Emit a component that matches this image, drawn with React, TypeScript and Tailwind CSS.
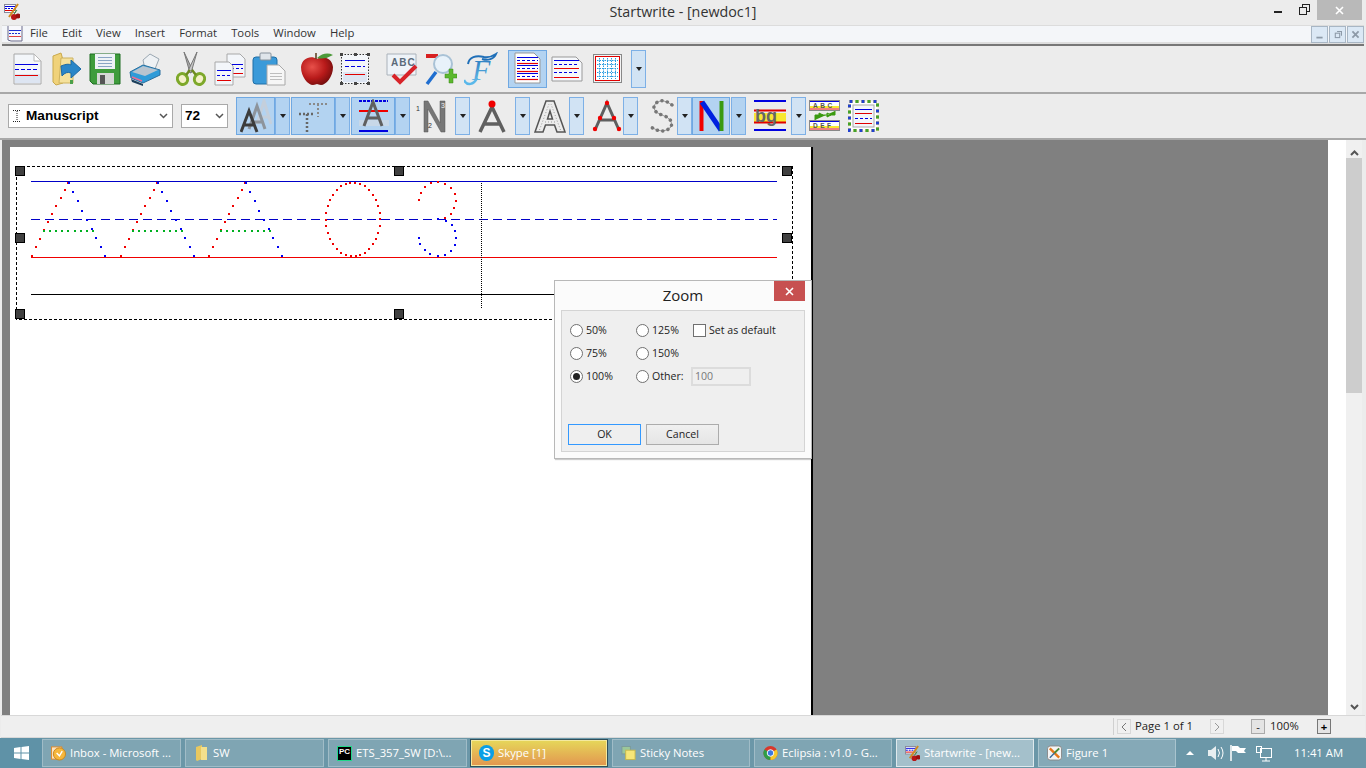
import type { ReactNode } from "react";

const A_RED = [[32, 256], [36, 247], [40, 239], [44, 230], [48, 222], [52, 214], [56, 206], [61, 198], [65, 190], [68, 183]];
const A_BLUE = [[69, 183], [73, 192], [78, 201], [82, 211], [87, 220], [92, 229], [96, 238], [101, 247], [105, 256]];
const A_GREEN = [44, 50, 56, 62, 68, 75, 81, 87, 93];
const THREE_RED = [[419, 200], [421, 193], [425, 187], [431, 183], [438, 182], [445, 184], [451, 188], [455, 194], [456, 201], [454, 208], [451, 214], [445, 218]];
const THREE_BLUE = [[438, 219], [446, 221], [452, 225], [455, 231], [456, 238], [455, 245], [451, 251], [445, 255], [438, 256], [430, 254], [425, 250], [420, 244], [419, 238]];
const O_DOTS = Array.from({ length: 34 }, (_, i) => {
  const a = (i / 34) * Math.PI * 2 + 0.09;
  return [Math.round(353 + 27 * Math.sin(a)), Math.round(219.5 - 37 * Math.cos(a))];
});
const HANDLES = [[20, 171], [399, 171], [787, 171], [20, 238], [787, 238], [20, 314], [399, 314]];

function Dot({ x, y, c }: { x: number; y: number; c: string }) {
  return <rect x={x - 1} y={y - 1} width={2} height={2} fill={c} />;
}

function Worksheet() {
  return (
    <svg width={801} height={190} viewBox="10 147 801 190" className="block" shapeRendering="crispEdges">
      <rect x={16.5} y={166.5} width={776} height={153} fill="none" stroke="#000" strokeDasharray="3 2" />
      <line x1={31} x2={777} y1={181.5} y2={181.5} stroke="#0000c8" />
      <line x1={31} x2={777} y1={219.5} y2={219.5} stroke="#0000c8" strokeDasharray="9 5" />
      <line x1={31} x2={777} y1={257.5} y2={257.5} stroke="#f00000" />
      <line x1={31} x2={777} y1={294.5} y2={294.5} stroke="#000" />
      <line x1={481.5} x2={481.5} y1={183} y2={308} stroke="#000" strokeDasharray="1 1" />
      {[0, 89, 177].map((off) => (
        <g key={off}>
          {A_RED.map(([x, y]) => <Dot key={`r${y}`} x={x + off} y={y} c="#f00000" />)}
          {A_BLUE.map(([x, y]) => <Dot key={`b${y}`} x={x + off} y={y} c="#0000f0" />)}
          {A_GREEN.map((x) => <Dot key={x} x={x + off} y={231} c="#00b020" />)}
        </g>
      ))}
      {O_DOTS.map(([x, y], i) => <Dot key={i} x={x} y={y} c="#f00000" />)}
      {THREE_RED.map(([x, y]) => <Dot key={`${x}-${y}`} x={x} y={y} c="#f00000" />)}
      {THREE_BLUE.map(([x, y]) => <Dot key={`${x}-${y}`} x={x} y={y} c="#0000f0" />)}
      {HANDLES.map(([x, y]) => (
        <rect key={`${x}-${y}`} x={x - 4.5} y={y - 4.5} width={9} height={9} fill="#404040" stroke="#000" />
      ))}
    </svg>
  );
}

function Icon({ children, w = 32, h = 34 }: { children: ReactNode; w?: number; h?: number }) {
  return (
    <svg width={w} height={h} viewBox={`0 0 ${w} ${h}`} className="block">
      {children}
    </svg>
  );
}

const DocIcon = () => (
  <Icon>
    <path d="M2 2H22L29 9V32H2Z" fill="#f3f6fa" stroke="#a8a8a8" />
    <path d="M22 2V9H29Z" fill="#fff" stroke="#b8b8b8" />
    <rect x={3} y={22} width={25} height={9} fill="#dde5f2" />
    <line x1={3} x2={26} y1={12.5} y2={12.5} stroke="#0000e0" />
    <line x1={3} x2={26} y1={17.5} y2={17.5} stroke="#0000e0" strokeDasharray="4 2" />
    <line x1={3} x2={26} y1={23.5} y2={23.5} stroke="#e00000" />
  </Icon>
);

const FolderIcon = () => (
  <Icon>
    <path d="M2 4L10 1L12 8V31L5 33L2 30Z" fill="#f0d27a" stroke="#c9a94c" />
    <path d="M10 6H22V31H8Z" fill="#f5e19c" stroke="#cdb25e" />
    <path d="M10 14Q17 11 20 13V8L30 17L20 26V21Q15 19 11 24Z" fill="#2a86c8" stroke="#1d6aa5" />
    <rect x={19} y={28} width={3} height={4} fill="#4aa04a" />
  </Icon>
);

const FloppyIcon = () => (
  <Icon>
    <path d="M1 2H31V32H4L1 29Z" fill="#3f9c3c" stroke="#1f6d22" />
    <rect x={6} y={2} width={20} height={15} fill="#eef2f6" />
    <g stroke="#8aa5c4">
      <line x1={9} x2={23} y1={5.5} y2={5.5} />
      <line x1={9} x2={23} y1={8.5} y2={8.5} />
      <line x1={9} x2={23} y1={11.5} y2={11.5} />
      <line x1={9} x2={23} y1={14.5} y2={14.5} />
    </g>
    <rect x={8} y={21} width={17} height={11} fill="#d5d8d5" />
    <rect x={11} y={23} width={5} height={9} fill="#555" />
  </Icon>
);

const PrinterIcon = () => (
  <Icon>
    <path d="M14 8L21 2L30 7L26 17L16 17Z" fill="#eef1f4" stroke="#9aa7b2" />
    <path d="M1 20L14 13L31 18V23L14 31L2 26Z" fill="#2f9bd8" stroke="#2a6f9e" />
    <path d="M3 20L14 14L29 18L16 24Z" fill="#b8c4cf" />
    <path d="M2 27L14 32V34L3 30Z" fill="#1d3f5c" />
    <path d="M3 25L13 29" stroke="#f06a90" strokeWidth={1.5} />
  </Icon>
);

const ScissorsIcon = () => (
  <Icon w={30}>
    <path d="M8 0L17 19L14 21Z" fill="#a9a9a9" stroke="#777" />
    <path d="M21 0L12 19L15 21Z" fill="#c8c8c8" stroke="#777" />
    <ellipse cx={6.5} cy={27} rx={5} ry={5.5} fill="#f4f0c8" stroke="#7da82a" strokeWidth={3} transform="rotate(-25 6.5 27)" />
    <ellipse cx={23.5} cy={27} rx={5} ry={5.5} fill="#f4f0c8" stroke="#7da82a" strokeWidth={3} transform="rotate(25 23.5 27)" />
    <path d="M10 23L14 18M20 23L16 18" stroke="#6e8a1e" strokeWidth={2.5} />
  </Icon>
);

const CopyIcon = () => (
  <Icon>
    <path d="M13 2H26L31 7V25H13Z" fill="#f3f6fa" stroke="#a8a8a8" />
    <line x1={17} x2={29} y1={12.5} y2={12.5} stroke="#0000e0" />
    <line x1={17} x2={29} y1={16.5} y2={16.5} stroke="#0000e0" strokeDasharray="3 2" />
    <line x1={17} x2={29} y1={21.5} y2={21.5} stroke="#e00000" />
    <path d="M1 10H15L19 14V33H1Z" fill="#f3f6fa" stroke="#a8a8a8" />
    <line x1={3} x2={17} y1={18.5} y2={18.5} stroke="#0000e0" />
    <line x1={3} x2={17} y1={23.5} y2={23.5} stroke="#0000e0" strokeDasharray="3 2" />
    <line x1={3} x2={17} y1={28.5} y2={28.5} stroke="#e00000" />
  </Icon>
);

const PasteIcon = () => (
  <Icon w={34}>
    <rect x={1} y={5} width={24} height={27} rx={3} fill="#3a9ad9" stroke="#1f6ea6" />
    <rect x={8} y={1} width={11} height={7} rx={1} fill="#dfe5ea" stroke="#87929c" />
    <path d="M15 13H27L33 19V33H15Z" fill="#f6f6f6" stroke="#a8a8a8" />
    <g stroke="#bdbdbd">
      <line x1={18} x2={30} y1={21.5} y2={21.5} />
      <line x1={18} x2={30} y1={24.5} y2={24.5} />
      <line x1={18} x2={30} y1={27.5} y2={27.5} />
    </g>
  </Icon>
);

const AppleIcon = () => (
  <Icon>
    <defs>
      <radialGradient id="apple" cx="0.35" cy="0.35" r="0.75">
        <stop offset="0" stopColor="#e8504a" />
        <stop offset="0.55" stopColor="#b81a1a" />
        <stop offset="1" stopColor="#6a0c0c" />
      </radialGradient>
    </defs>
    <path d="M16 7C22 3 31 6 32 15C32 25 25 33 20 33C18 33 17 32 16 32C15 32 14 33 12 33C7 33 0 25 0 15C1 6 10 3 16 7Z" fill="url(#apple)" />
    <path d="M16 6Q24 -1 32 3Q24 8 16 6Z" fill="#4c9a3a" />
    <line x1={15} x2={15} y1={1} y2={7} stroke="#5a3a1a" strokeWidth={1.5} />
  </Icon>
);

const SelectDocIcon = () => (
  <Icon>
    <rect x={2.5} y={2.5} width={27} height={29} fill="#f3f6fa" stroke="#333" strokeDasharray="1.5 1.5" />
    <rect x={4} y={20} width={24} height={10} fill="#dde5f2" />
    <line x1={6} x2={26} y1={8.5} y2={8.5} stroke="#0000e0" />
    <line x1={6} x2={26} y1={14.5} y2={14.5} stroke="#0000e0" strokeDasharray="4 2" />
    <line x1={6} x2={26} y1={22.5} y2={22.5} stroke="#e00000" />
    {[[1, 1], [28, 1], [1, 30], [28, 30], [15, 1], [15, 30]].map(([x, y]) => (
      <rect key={`${x}-${y}`} x={x} y={y} width={3} height={3} fill="#444" />
    ))}
  </Icon>
);

const SpellIcon = () => (
  <Icon>
    <path d="M1 2H30V23H1Z" fill="#eef3f8" stroke="#aab2ba" />
    <text x={5} y={14} fontSize={10} fontWeight={700} letterSpacing={1} fontFamily="Liberation Sans" fill="#5a6a7a">ABC</text>
    <path d="M7 23L14 30L30 14" fill="none" stroke="#d8242a" strokeWidth={4} />
  </Icon>
);

const MagnifyIcon = () => (
  <Icon>
    <rect x={1} y={2} width={12} height={4} fill="#d82020" />
    <circle cx={18} cy={12} r={9} fill="#e8f2fa" stroke="#a9c2d6" strokeWidth={2} />
    <line x1={11} x2={2} y1={20} y2={32} stroke="#1f6ed0" strokeWidth={3.5} />
    <path d="M24 17H28V22H32V26H28V31H24V26H20V22H24Z" fill="#5cb82e" stroke="#3a8a1a" strokeWidth={0.5} />
  </Icon>
);

const ScriptF = () => (
  <svg width={34} height={34} viewBox="0 0 34 34" className="block">
    <defs>
      <linearGradient id="fblue" x1="0" x2="0" y1="0" y2="1">
        <stop offset="0" stopColor="#1f6fb8" />
        <stop offset="1" stopColor="#6cc4ee" />
      </linearGradient>
    </defs>
    <path d="M4 12C5 5 12 3 20 5C25 6 29 4 32 2C30 7 24 9 18 7" fill="none" stroke="#1f6fb8" strokeWidth={2} />
    <path d="M0 28C3 34 10 33 13 26" fill="none" stroke="#5ab8ea" strokeWidth={2.5} />
    <text x={8} y={28} fontSize={30} fontStyle="italic" fontFamily="Liberation Serif" fill="url(#fblue)">F</text>
  </svg>
);

const PortraitIcon = () => (
  <Icon w={28}>
    <path d="M1 1H20L26 7V31H1Z" fill="#fff" stroke="#999" />
    {[5, 13, 21].map((y) => (
      <g key={y}>
        <line x1={3} x2={24} y1={y + 0.5} y2={y + 0.5} stroke="#0000e0" />
        <line x1={3} x2={24} y1={y + 3.5} y2={y + 3.5} stroke="#0000e0" strokeDasharray="3 2" />
        <line x1={3} x2={24} y1={y + 6.5} y2={y + 6.5} stroke="#e80000" strokeWidth={1.2} />
      </g>
    ))}
  </Icon>
);

const LandscapeIcon = () => (
  <Icon h={28}>
    <path d="M1 2H25L31 8V26H1Z" fill="#f6f8fb" stroke="#999" />
    <line x1={3} x2={28} y1={5.5} y2={5.5} stroke="#0000e0" />
    <line x1={3} x2={28} y1={9.5} y2={9.5} stroke="#0000e0" strokeDasharray="3 2" />
    <line x1={3} x2={28} y1={13.5} y2={13.5} stroke="#e80000" />
    <line x1={3} x2={28} y1={17.5} y2={17.5} stroke="#0000e0" strokeDasharray="3 2" />
    <line x1={3} x2={28} y1={22.5} y2={22.5} stroke="#e80000" />
  </Icon>
);

const GridIcon = () => (
  <Icon w={30} h={30}>
    <rect x={0.5} y={0.5} width={28} height={28} fill="#f4f4f4" stroke="#888" />
    <rect x={2.5} y={2.5} width={24} height={24} fill="#fff" stroke="#e00000" />
    {[6, 10, 14, 18, 22].map((n) => (
      <g key={n} stroke="#2a9de0" strokeDasharray="1.5 1">
        <line x1={n + 0.5} x2={n + 0.5} y1={4} y2={25} />
        <line x1={4} x2={25} y1={n + 0.5} y2={n + 0.5} />
      </g>
    ))}
  </Icon>
);

const letter = "#5f5f5f";
const StackA = () => (
  <Icon>
    <path d="M17 25L24 2L31 25M20 18H28" fill="none" stroke="#c4cfdc" strokeWidth={3} />
    <path d="M9 30L17 7L25 30M12 23H22" fill="none" stroke="#8d949c" strokeWidth={3} />
    <path d="M1 33L9 12L17 33M4 26H14" fill="none" stroke="#3c3c3c" strokeWidth={3} />
  </Icon>
);
const DottedT = () => (
  <Icon>
    <g stroke="#666" strokeWidth={2.5} strokeDasharray="2 2" fill="none">
      <path d="M2 15H18M10 15V33" />
    </g>
    <g stroke="#8a8a8a" strokeWidth={2} strokeDasharray="2 2" fill="none">
      <path d="M12 5H31M21 5V18" />
    </g>
  </Icon>
);
const GuideA = () => (
  <Icon>
    <line x1={2} x2={31} y1={2} y2={2} stroke="#0000e0" strokeWidth={2} strokeDasharray="3 1" />
    <line x1={2} x2={31} y1={12} y2={12} stroke="#f00000" strokeWidth={2} />
    <rect x={2} y={21} width={30} height={6} fill="#c8d8e8" />
    <line x1={2} x2={31} y1={32} y2={32} stroke="#0000e0" strokeWidth={2} />
    <path d="M7 27L16 3L25 27M10 19H22" fill="none" stroke="#5f5f5f" strokeWidth={3} />
  </Icon>
);
const NumberedN = () => (
  <Icon>
    <path d="M8 33V2H12L24 24V2H29V33H25L12 10V33Z" fill="#777" stroke="#555" strokeWidth={0.5} />
    <text x={0} y={12} fontSize={7} fontFamily="Liberation Sans" fill="#333">1</text>
    <text x={12} y={29} fontSize={7} fontFamily="Liberation Sans" fill="#333">2</text>
    <text x={25} y={9} fontSize={7} fontFamily="Liberation Sans" fill="#eee">3</text>
  </Icon>
);
const TopDotA = () => (
  <Icon w={28}>
    <path d="M2 33L14 8L26 33M7 25H21" fill="none" stroke={letter} strokeWidth={3.5} />
    <circle cx={14} cy={5} r={3.5} fill="#f00000" />
  </Icon>
);
const OutlineA = () => (
  <Icon>
    <path d="M1 33L12 2H20L31 33H23L20.5 26H11.5L9 33ZM13.5 20H18.5L16 12Z" fill="#ececec" stroke="#555" strokeWidth={1.5} fillRule="evenodd" />
    <path d="M5.5 31L15 5M26.5 31L17 5M11 23H21" stroke="#999" strokeDasharray="1 2" fill="none" />
  </Icon>
);
const RedDotsA = () => (
  <Icon>
    <path d="M4 31L16 4L28 31M9 21H23" fill="none" stroke={letter} strokeWidth={3} />
    {[[16, 4], [9, 19], [23, 19], [4, 30], [28, 30]].map(([x, y]) => (
      <circle key={`${x}-${y}`} cx={x} cy={y} r={2.2} fill="#f00000" />
    ))}
  </Icon>
);
const BeadS = () => (
  <Icon w={28}>
    <path d="M24 6Q14 -2 7 5Q3 12 14 16Q26 20 23 28Q15 36 3 28" fill="none" stroke="#999" strokeWidth={1} />
    <path d="M24 6Q14 -2 7 5Q3 12 14 16Q26 20 23 28Q15 36 3 28" fill="none" stroke="#777" strokeWidth={3.5} strokeLinecap="round" strokeDasharray="0.1 5.4" />
  </Icon>
);
const ColorN = () => (
  <Icon>
    <line x1={6.5} x2={6.5} y1={2} y2={32} stroke="#f00000" strokeWidth={4} />
    <line x1={7} x2={26} y1={3} y2={31} stroke="#0020e0" strokeWidth={5} />
    <line x1={26.5} x2={26.5} y1={2} y2={32} stroke="#3a9a10" strokeWidth={4} />
  </Icon>
);
const HighlightBg = () => (
  <Icon>
    <line x1={0} x2={32} y1={2} y2={2} stroke="#0000e0" strokeWidth={2} />
    <rect x={0} y={14} width={32} height={9} fill="#f8e830" />
    <line x1={0} x2={32} y1={11.5} y2={11.5} stroke="#e00000" strokeWidth={2} />
    <line x1={0} x2={32} y1={23.5} y2={23.5} stroke="#e00000" strokeWidth={2} />
    <line x1={0} x2={32} y1={31} y2={31} stroke="#0000e0" strokeWidth={2} />
    <text x={1} y={23} fontSize={18} fontWeight={700} fontFamily="Liberation Sans" fill="#666">bg</text>
  </Icon>
);
const LinkedRows = () => (
  <Icon>
    <rect x={0.5} y={1.5} width={30} height={10} fill="#fff" stroke="#888" />
    <line x1={1} x2={30} y1={2.5} y2={2.5} stroke="#0000e0" />
    <rect x={1} y={7} width={29} height={2} fill="#f8e830" />
    <line x1={1} x2={30} y1={10} y2={10} stroke="#e00000" />
    <text x={4} y={9} fontSize={6.5} fontWeight={700} letterSpacing={2.5} fontFamily="Liberation Sans" fill="#555">ABC</text>
    <rect x={0.5} y={21.5} width={30} height={10} fill="#fff" stroke="#888" />
    <line x1={1} x2={30} y1={22.5} y2={22.5} stroke="#0000e0" />
    <rect x={1} y={27} width={29} height={2} fill="#f8e830" />
    <line x1={1} x2={30} y1={30} y2={30} stroke="#e00000" />
    <text x={4} y={29} fontSize={6.5} fontWeight={700} letterSpacing={2.5} fontFamily="Liberation Sans" fill="#555">DEF</text>
    <path d="M26 12V16H6V21M22 16L18 14V18ZM14 16L10 14V18Z" fill="#3a9a10" stroke="#3a9a10" />
  </Icon>
);
const BorderDoc = () => (
  <svg width={32} height={34} viewBox="0 0 32 34" className="block">
    <rect x={1.5} y={2.5} width={28} height={29} fill="#fff" stroke="#e0c020" strokeWidth={3} strokeDasharray="3 3" />
    <rect x={1.5} y={2.5} width={28} height={29} fill="none" stroke="#2040d0" strokeWidth={3} strokeDasharray="3 9" />
    <rect x={1.5} y={2.5} width={28} height={29} fill="none" stroke="#40a030" strokeWidth={3} strokeDasharray="3 9" strokeDashoffset={6} />
    <rect x={5} y={6} width={21} height={22} fill="#f3f6fa" stroke="#aaa" />
    <line x1={7} x2={24} y1={10.5} y2={10.5} stroke="#0000e0" />
    <line x1={7} x2={24} y1={14.5} y2={14.5} stroke="#e00000" />
    <line x1={7} x2={24} y1={19.5} y2={19.5} stroke="#0000e0" strokeDasharray="3 2" />
    <line x1={7} x2={24} y1={24.5} y2={24.5} stroke="#e00000" />
  </svg>
);

const AppIcon = ({ size = 16 }: { size?: number }) => (
  <svg width={size} height={size + 2} viewBox="0 0 16 18" className="block">
    <rect x={0.5} y={1.5} width={11} height={8} fill="#fff" stroke="#889" />
    <line x1={1} x2={11} y1={3.5} y2={3.5} stroke="#0000e0" />
    <line x1={1} x2={11} y1={5.5} y2={5.5} stroke="#0000e0" strokeDasharray="2 1" />
    <line x1={1} x2={11} y1={7.5} y2={7.5} stroke="#e00000" />
    <line x1={14} x2={5} y1={1} y2={14} stroke="#d08a20" strokeWidth={2} />
    <circle cx={10} cy={14} r={3} fill="#b81515" />
    <circle cx={14} cy={13} r={2.5} fill="#9a1010" />
    <path d="M10 11L13 7" stroke="#3a8a2a" />
  </svg>
);

const MenuDocIcon = () => (
  <svg width={16} height={16} viewBox="0 0 16 16" className="block">
    <path d="M1 0V14L4 15H15V0" fill="#f8f8fc" stroke="#6a6a8a" />
    <line x1={2} x2={14} y1={4.5} y2={4.5} stroke="#2030d0" />
    <line x1={2} x2={14} y1={7.5} y2={7.5} stroke="#2030d0" strokeDasharray="2 1" />
    <line x1={2} x2={14} y1={10.5} y2={10.5} stroke="#e04040" />
  </svg>
);

const DottedBeam = () => (
  <svg width={10} height={14} viewBox="0 0 10 14" className="block mr-[4px] shrink-0">
    <path d="M1 1.5H9M1 12.5H9M5 2V12" fill="none" stroke="#222" strokeDasharray="1 1" />
  </svg>
);

const Caret = () => <span className="block w-0 h-0 border-x-[3.5px] border-x-transparent border-t-[4px] border-t-[#222]" />;

function Btn({ children, className = "" }: { children: ReactNode; className?: string }) {
  return <div className={`w-[39px] h-[38px] shrink-0 flex items-center justify-center ${className}`}>{children}</div>;
}

function Drop({ on = false, className = "" }: { on?: boolean; className?: string }) {
  return (
    <div className={`w-[15px] h-[38px] shrink-0 flex items-center justify-center border border-[#7db0e6] ${on ? "bg-[#b3d3f1]" : "bg-[#d1e3f4]"} ${className}`}>
      <Caret />
    </div>
  );
}

function ActiveBtn({ children, className = "" }: { children: ReactNode; className?: string }) {
  return <div className={`h-[38px] shrink-0 flex items-center justify-center bg-[#b3d3f1] border border-[#6fa8e2] ${className}`}>{children}</div>;
}

const Chevron = () => (
  <svg width={9} height={6} viewBox="0 0 9 6" className="block">
    <path d="M1 1L4.5 4.5L8 1" fill="none" stroke="#555" strokeWidth={1.5} />
  </svg>
);

function Radio({ label, checked = false, className = "" }: { label: string; checked?: boolean; className?: string }) {
  return (
    <div className={`flex items-center gap-[3px] ${className}`}>
      <span className="w-[13px] h-[13px] rounded-full border border-[#707070] bg-white flex items-center justify-center">
        {checked && <span className="w-[7px] h-[7px] rounded-full bg-[#222]" />}
      </span>
      <span>{label}</span>
    </div>
  );
}

function ZoomDialog() {
  return (
    <div className="absolute left-[554px] top-[280px] w-[258px] h-[179px] bg-[#fbfbfb] border border-[#b8b8b8] shadow-[1px_1px_1px_rgba(0,0,0,0.2)] flex flex-col">
      <div className="h-[29px] relative flex items-center justify-center text-[15px] text-[#222]">
        Zoom
        <div className="absolute right-[6px] top-0 w-[31px] h-[20px] bg-[#c75050] flex items-center justify-center">
          <svg width={9} height={9} viewBox="0 0 9 9" className="block">
            <path d="M1 1L8 8M8 1L1 8" stroke="#fff" strokeWidth={1.6} />
          </svg>
        </div>
      </div>
      <div className="mx-[6px] h-[142px] bg-[#efefef] border border-[#d4d4d4] flex flex-col text-[10.6px] text-[#222] pl-[8px]">
        <div className="grid grid-cols-[66px_57px_auto] auto-rows-[23px] items-center mt-[8px]">
          <Radio label="50%" />
          <Radio label="125%" />
          <div className="flex items-center gap-[3px]">
            <span className="w-[13px] h-[13px] border border-[#707070] bg-white" />
            <span>Set as default</span>
          </div>
          <Radio label="75%" />
          <Radio label="150%" />
          <span />
          <Radio label="100%" checked />
          <Radio label="Other:" />
          <div className="w-[60px] h-[19px] -ml-[2px] border-2 border-[#dcdcdc] bg-[#efefef] text-[#777] pl-[2px] leading-[15px]">100</div>
        </div>
        <div className="flex gap-[5px] mt-[36px] -ml-[2px]">
          <div className="w-[73px] h-[21px] border border-[#3399ff] bg-[#efefef] flex items-center justify-center">OK</div>
          <div className="w-[73px] h-[21px] border border-[#acacac] bg-[linear-gradient(#f0f0f0,#e5e5e5)] flex items-center justify-center">Cancel</div>
        </div>
      </div>
    </div>
  );
}

const TaskIcons = {
  outlook: (
    <svg width={16} height={16} viewBox="0 0 16 16" className="block">
      <rect x={0.5} y={1.5} width={11} height={13} fill="#fbe3c0" stroke="#e08a2a" />
      <circle cx={9} cy={9} r={6.5} fill="#f6b73c" stroke="#c8851e" />
      <path d="M6 8L9 11L12 6" fill="none" stroke="#fff" strokeWidth={1.5} />
    </svg>
  ),
  folder: (
    <svg width={14} height={16} viewBox="0 0 14 16" className="block">
      <path d="M1 2L7 0V14L2 16L1 15Z" fill="#e8c860" />
      <path d="M6 2H12V15H6Z" fill="#f4e08c" />
    </svg>
  ),
  pycharm: (
    <div className="w-[15px] h-[15px] bg-black border border-[#21d789] text-white text-[8px] font-bold leading-[10px] pl-[1px] font-['Liberation_Sans',sans-serif]">PC</div>
  ),
  skype: (
    <div className="w-[16px] h-[16px] rounded-full bg-[#0a9fe6] text-white text-[12px] font-bold leading-[16px] text-center font-['Liberation_Sans',sans-serif]">S</div>
  ),
  sticky: (
    <svg width={16} height={16} viewBox="0 0 16 16" className="block">
      <rect x={1} y={1} width={9} height={8} fill="#9bc79b" stroke="#7a9a9a" />
      <rect x={5} y={5} width={10} height={10} fill="#f6e678" stroke="#c8b84a" />
    </svg>
  ),
  chrome: (
    <svg width={16} height={16} viewBox="0 0 16 16" className="block">
      <circle cx={8} cy={8} r={7.5} fill="#d8382c" />
      <path d="M8 8L1.5 4.2A7.5 7.5 0 0 0 8 15.5Z" fill="#2f9e46" />
      <path d="M8 8V15.5A7.5 7.5 0 0 0 14.5 4.2Z" fill="#f6c92c" />
      <circle cx={8} cy={8} r={3.5} fill="#3a78e0" stroke="#fff" />
    </svg>
  ),
  app: <AppIcon size={15} />,
  figure: (
    <svg width={16} height={16} viewBox="0 0 16 16" className="block">
      <rect x={0.5} y={0.5} width={15} height={15} rx={3} fill="#f4f4f4" stroke="#888" />
      <path d="M3 3L13 13" stroke="#e8781a" strokeWidth={2.5} />
      <path d="M13 3L8 8" stroke="#4a8a3a" strokeWidth={2} />
      <path d="M3 13L8 8" stroke="#3a6a9a" strokeWidth={1.5} />
    </svg>
  ),
};

const TASKS: { label: string; icon: keyof typeof TaskIcons; size: string; kind?: "hot" | "active" | "light" }[] = [
  { label: "Inbox - Microsoft ...", icon: "outlook", size: "w-[139px]" },
  { label: "SW", icon: "folder", size: "w-[139px]" },
  { label: "ETS_357_SW [D:\\...", icon: "pycharm", size: "w-[139px]" },
  { label: "Skype [1]", icon: "skype", size: "w-[138px] -ml-px", kind: "hot" },
  { label: "Sticky Notes", icon: "sticky", size: "w-[138px]" },
  { label: "Eclipsia : v1.0 - G...", icon: "chrome", size: "w-[138px]" },
  { label: "Startwrite - [new...", icon: "app", size: "w-[138px]", kind: "active" },
  { label: "Figure 1", icon: "figure", size: "w-[138px]", kind: "light" },
];

function taskClass(kind?: "hot" | "active" | "light") {
  if (kind === "hot") return "bg-[linear-gradient(#e6d85a,#e2954f)] border-[#2f4f5a] shadow-[inset_0_0_0_1px_#f4e9a0]";
  if (kind === "active") return "bg-[#a4c0cb] border-[#dfe9ed]";
  if (kind === "light") return "bg-[#85a9b7] border-[#a9c4ce]";
  return "bg-[#7fa5b3] border-[#a0bcc7]";
}

export default function App() {
  return (
    <div className="relative w-[1366px] h-[768px] overflow-hidden flex flex-col bg-[#ececec] font-['Open_Sans',sans-serif] text-[11.3px] text-[#222]">
      {/* title bar */}
      <div className="h-[24px] relative flex items-center justify-center text-[14.3px] text-[#333] shrink-0">
        <div className="absolute left-[4px] top-[3px]"><AppIcon /></div>
        <span>Startwrite - [newdoc1]</span>
        <div className="absolute right-[4px] top-0 flex items-start">
          <svg width={46} height={20} viewBox="0 0 46 20" className="block">
            <rect x={3} y={11} width={8} height={2} fill="#222" />
            <rect x={31.5} y={4.5} width={7} height={7} fill="none" stroke="#222" />
            <rect x={28.5} y={7.5} width={7} height={7} fill="#ececec" stroke="#222" />
          </svg>
          <div className="w-[45px] h-[20px] bg-[#b9b9b9] flex items-center justify-center">
            <svg width={9} height={9} viewBox="0 0 9 9" className="block">
              <path d="M1 1L8 8M8 1L1 8" stroke="#fff" strokeWidth={1.6} />
            </svg>
          </div>
        </div>
      </div>

      {/* menu bar */}
      <div className="h-[17px] mt-px ml-[2px] mr-[2px] bg-[#f4f6f9] flex items-center relative shrink-0 border-t border-[#dcdcdc]">
        <div className="ml-[5px] mr-[7px]"><MenuDocIcon /></div>
        <div className="flex gap-[14px] text-[#333] -mt-px">
          {["File", "Edit", "View", "Insert", "Format", "Tools", "Window", "Help"].map((m) => (
            <span key={m}>{m}</span>
          ))}
        </div>
        <div className="absolute right-0 top-0 flex gap-px">
          {[
            <rect key="a" x={5} y={10} width={7} height={2} fill="#8d9aa8" />,
            <g key="b" fill="none" stroke="#8d9aa8" strokeWidth={1.2}><rect x={6} y={6} width={5} height={5} /><path d="M8 4H13V9" /></g>,
            <path key="c" d="M5 4L12 11M12 4L5 11" stroke="#8d9aa8" strokeWidth={2} />,
          ].map((g, i) => (
            <div key={i} className="w-[17px] h-[17px] border border-[#a8b6c4] bg-[#dbe8f5]">
              <svg width={15} height={15} viewBox="0 0 17 15" className="block">{g}</svg>
            </div>
          ))}
        </div>
      </div>
      <div className="h-[2px] mx-[2px] bg-[#dedede] shrink-0" />
      <div className="h-[2px] mx-[2px] bg-[#777] shrink-0" />

      {/* main toolbar */}
      <div className="h-[48px] flex items-center pl-[8px] shrink-0 border-b-2 border-[#a8a8a8]">
        <Btn><DocIcon /></Btn>
        <Btn><FolderIcon /></Btn>
        <Btn className="-ml-px"><FloppyIcon /></Btn>
        <Btn className="ml-px"><PrinterIcon /></Btn>
        <Btn className="ml-[7px]"><ScissorsIcon /></Btn>
        <Btn><CopyIcon /></Btn>
        <Btn><PasteIcon /></Btn>
        <Btn className="ml-[9px]"><AppleIcon /></Btn>
        <Btn className="-ml-px"><SelectDocIcon /></Btn>
        <Btn className="ml-[8px]"><SpellIcon /></Btn>
        <Btn><MagnifyIcon /></Btn>
        <Btn className="ml-px"><ScriptF /></Btn>
        <ActiveBtn className="w-[39px] ml-[8px]"><PortraitIcon /></ActiveBtn>
        <Btn><LandscapeIcon /></Btn>
        <Btn className="ml-[2px]"><GridIcon /></Btn>
        <Drop className="ml-[4px]" />
      </div>

      {/* format toolbar */}
      <div className="h-[46px] flex items-center pl-[8px] shrink-0 border-b-2 border-[#a8a8a8]">
        <div className="w-[165px] h-[24px] bg-white border border-[#a9a9a9] flex items-center pl-[3px] pr-[4px] shrink-0">
          <DottedBeam />
          <span className="flex-1 font-['Liberation_Sans',sans-serif] font-bold text-[13.6px] text-black">Manuscript</span>
          <Chevron />
        </div>
        <div className="w-[47px] h-[24px] ml-[8px] bg-white border border-[#a9a9a9] flex items-center px-[3px] shrink-0">
          <span className="flex-1 font-['Liberation_Sans',sans-serif] text-[13.6px] font-bold text-black">72</span>
          <Chevron />
        </div>
        <ActiveBtn className="w-[39px] ml-[8px]"><StackA /></ActiveBtn>
        <Drop on />
        <ActiveBtn className="w-[44px] ml-px"><DottedT /></ActiveBtn>
        <Drop on />
        <ActiveBtn className="w-[44px] ml-px"><GuideA /></ActiveBtn>
        <Drop on />
        <Btn className="ml-[2px]"><NumberedN /></Btn>
        <Drop className="ml-[4px]" />
        <Btn className="ml-[2px]"><TopDotA /></Btn>
        <Drop className="ml-[4px]" />
        <Btn><OutlineA /></Btn>
        <Drop />
        <Btn className="ml-[3px]"><RedDotsA /></Btn>
        <Drop className="-ml-[3px]" />
        <Btn className="ml-[4px]"><BeadS /></Btn>
        <Drop className="-ml-[4px]" />
        <ActiveBtn className="w-[38px]"><ColorN /></ActiveBtn>
        <Drop on className="ml-px" />
        <Btn className="ml-[4px]"><HighlightBg /></Btn>
        <Drop className="ml-[2px]" />
        <Btn className="-ml-px"><LinkedRows /></Btn>
        <Btn><BorderDoc /></Btn>
      </div>

      {/* workspace */}
      <div className="flex-1 min-h-0 flex pl-[2px] pr-[4px] overflow-hidden">
        <div className="w-[1326px] bg-[#808080] pl-[8px] pt-[7px] shrink-0">
          <div className="w-[803px] h-full bg-white border-r-2 border-black">
            <Worksheet />
          </div>
        </div>
        <div className="w-[18px] bg-white shrink-0" />
        <div className="w-[16px] bg-[#f0f0f0] flex flex-col shrink-0 pt-[7px]">
          <div className="h-[11px] flex items-center justify-center">
            <svg width={9} height={6} viewBox="0 0 9 6" className="block"><path d="M1 5L4.5 1.5L8 5" fill="none" stroke="#555" strokeWidth={2} /></svg>
          </div>
          <div className="h-[235px] bg-[#cdcdcd]" />
          <div className="flex-1" />
          <div className="h-[16px] flex items-center justify-center">
            <svg width={9} height={6} viewBox="0 0 9 6" className="block"><path d="M1 1L4.5 4.5L8 1" fill="none" stroke="#555" strokeWidth={2} /></svg>
          </div>
        </div>
      </div>

      {/* status bar */}
      <div className="h-[23px] shrink-0 border-y border-[#d8d8d8] mx-[1px] bg-[#efefef] flex items-center pl-[1112px] text-[#222]">
        <div className="h-[17px] border-l border-[#d0d0d0] pl-[3px] flex items-center">
          <div className="w-[14px] h-[15px] bg-[#f0f0f0] border border-[#d8d8d8] flex items-center justify-center">
            <svg width={6} height={10} viewBox="0 0 6 10" className="block"><path d="M5 1L1 5L5 9" fill="none" stroke="#777" /></svg>
          </div>
        </div>
        <span className="ml-[4px] w-[75px]">Page 1 of 1</span>
        <div className="w-[14px] h-[15px] bg-[#f0f0f0] border border-[#d8d8d8] flex items-center justify-center">
          <svg width={6} height={10} viewBox="0 0 6 10" className="block"><path d="M1 1L5 5L1 9" fill="none" stroke="#999" /></svg>
        </div>
        <div className="w-[14px] h-[15px] ml-[27px] bg-[#e4e4e4] border border-[#aaa] flex items-center justify-center leading-none">-</div>
        <span className="ml-[5px] w-[47px]">100%</span>
        <div className="w-[14px] h-[15px] bg-[#e4e4e4] border border-[#777] flex items-center justify-center font-bold text-black leading-none">+</div>
      </div>

      {/* taskbar */}
      <div className="h-[30px] shrink-0 bg-[#6b97a8] flex items-center text-white text-[11.3px]">
        <div className="w-[42px] h-full bg-[#5f92a7] flex items-center justify-center shrink-0">
          <svg width={15} height={14} viewBox="0 0 15 14" className="block">
            <path d="M0 2L6.5 1V6.5H0ZM7.5 1L15 0V6.5H7.5ZM0 7.5H6.5V13L0 12ZM7.5 7.5H15V14L7.5 13Z" fill="#fff" />
          </svg>
        </div>
        <div className="flex gap-[4px]">
          {TASKS.map((t) => (
            <div
              key={t.label}
              className={`h-[28px] shrink-0 border flex items-center pl-[8px] gap-[4px] whitespace-nowrap ${t.size} ${taskClass(t.kind)}`}
            >
              <span className="w-[15px] shrink-0 flex justify-center">{TaskIcons[t.icon]}</span>
              <span>{t.label}</span>
            </div>
          ))}
        </div>
        <div className="flex items-center ml-[10px]">
          <svg width={96} height={20} viewBox="0 0 96 20" className="block">
            <path d="M0 12L4 8L8 12Z" fill="#fff" />
            <path d="M22 7H25L30 3V17L25 13H22Z" fill="#e8eef0" />
            <path d="M32 6Q35 10 32 14M35 4Q39 10 35 16" fill="none" stroke="#fff" />
            <path d="M45 2V18" stroke="#fff" strokeWidth={1.5} />
            <path d="M46 3H52L54 5H60L58 8L60 10H52L50 8H46Z" fill="#fff" />
            <rect x={70.5} y={3.5} width={5} height={6} fill="none" stroke="#fff" />
            <rect x={74.5} y={5.5} width={11} height={9} fill="none" stroke="#fff" />
            <path d="M80 15V18M76 18H84" stroke="#fff" />
          </svg>
          <span className="ml-[12px]">11:41 AM</span>
        </div>
      </div>

      <ZoomDialog />
    </div>
  );
}
